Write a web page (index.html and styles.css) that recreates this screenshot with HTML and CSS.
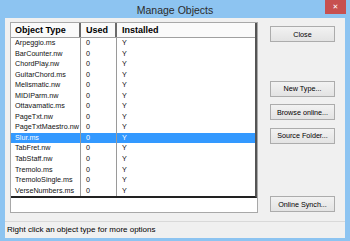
FILE: index.html
```html
<!DOCTYPE html>
<html lang="en">
<head>
    <meta charset="UTF-8">
    <title>Manage Objects</title>
    <link rel="stylesheet" href="styles.css">
</head>
<body>
    <div class="window">
        <div class="titlebar">
            <span></span>
            <span class="title">Manage Objects</span>
            <span class="close-x">&#x2715;</span>
        </div>

        <div class="client">
            <div class="main">
                <div class="list-box">
                    <div class="grid">
                        <div class="row head">
                            <div class="cell c1">Object Type</div>
                            <div class="cell c2">Used</div>
                            <div class="cell c3">Installed</div>
                        </div>
                        <div class="row"><div class="cell c1">Arpeggio.ms</div><div class="cell c2">0</div><div class="cell c3">Y</div></div>
                        <div class="row"><div class="cell c1">BarCounter.nw</div><div class="cell c2">0</div><div class="cell c3">Y</div></div>
                        <div class="row"><div class="cell c1">ChordPlay.nw</div><div class="cell c2">0</div><div class="cell c3">Y</div></div>
                        <div class="row"><div class="cell c1">GuitarChord.ms</div><div class="cell c2">0</div><div class="cell c3">Y</div></div>
                        <div class="row"><div class="cell c1">Melismatic.nw</div><div class="cell c2">0</div><div class="cell c3">Y</div></div>
                        <div class="row"><div class="cell c1">MIDIParm.nw</div><div class="cell c2">0</div><div class="cell c3">Y</div></div>
                        <div class="row"><div class="cell c1">Ottavamatic.ms</div><div class="cell c2">0</div><div class="cell c3">Y</div></div>
                        <div class="row"><div class="cell c1">PageTxt.nw</div><div class="cell c2">0</div><div class="cell c3">Y</div></div>
                        <div class="row"><div class="cell c1">PageTxtMaestro.nw</div><div class="cell c2">0</div><div class="cell c3">Y</div></div>
                        <div class="row selected"><div class="cell c1">Slur.ms</div><div class="cell c2">0</div><div class="cell c3">Y</div></div>
                        <div class="row"><div class="cell c1">TabFret.nw</div><div class="cell c2">0</div><div class="cell c3">Y</div></div>
                        <div class="row"><div class="cell c1">TabStaff.nw</div><div class="cell c2">0</div><div class="cell c3">Y</div></div>
                        <div class="row"><div class="cell c1">Tremolo.ms</div><div class="cell c2">0</div><div class="cell c3">Y</div></div>
                        <div class="row"><div class="cell c1">TremoloSingle.ms</div><div class="cell c2">0</div><div class="cell c3">Y</div></div>
                        <div class="row"><div class="cell c1">VerseNumbers.ms</div><div class="cell c2">0</div><div class="cell c3">Y</div></div>
                    </div>
                </div>

                <div class="buttons">
                    <button class="btn btn-close">Close</button>
                    <button class="btn btn-new">New Type...</button>
                    <button class="btn">Browse online...</button>
                    <button class="btn">Source Folder...</button>
                    <button class="btn btn-sync">Online Synch...</button>
                </div>
            </div>

            <div class="status">Right click an object type for more options</div>
        </div>
    </div>
</body>
</html>
```

FILE: styles.css
```css
body {
    margin: 0;
    font-family: "Liberation Sans", Arial, sans-serif;
}

.window {
    width: 350px;
    height: 241px;
    background-color: #8dc4f1;
    display: flex;
    flex-direction: column;
    overflow: hidden;
}

.titlebar {
    height: 18px;
    display: grid;
    grid-template-columns: 1fr auto 1fr;
    align-items: start;
}

.title {
    font-size: 10.5px;
    color: #2b2b2b;
    line-height: 20px;
}

.close-x {
    justify-self: end;
    width: 21px;
    height: 14px;
    margin-right: 4px;
    background-color: #c75050;
    color: #fff;
    font-family: "DejaVu Sans", sans-serif;
    font-size: 7px;
    font-weight: bold;
    line-height: 14px;
    text-align: center;
}

.client {
    flex: 1;
    margin: 0 5px 4px 5px;
    background-color: #f0f0f0;
    display: flex;
    flex-direction: column;
}

.main {
    display: flex;
    padding: 4px 0 0 5px;
    height: 203px;
    box-sizing: border-box;
}

.list-box {
    width: 248px;
    height: 191px;
    background-color: #fff;
    border: 1px solid #a8a8a8;
    box-sizing: border-box;
}

.grid {
    width: 246px;
    border-right: 2px solid #555;
    border-bottom: 2px solid #222;
    box-sizing: border-box;
}

.row {
    display: flex;
    height: 10.55px;
    font-size: 7.2px;
    line-height: 10.55px;
    color: #111;
}

.cell {
    white-space: nowrap;
    overflow: hidden;
    box-sizing: border-box;
}

.c1 {
    width: 70px;
    padding-left: 4px;
    border-right: 1px solid #9a9a9a;
}

.c2 {
    width: 36px;
    padding-left: 5px;
    border-right: 1px solid #9a9a9a;
}

.c3 {
    flex: 1;
    padding-left: 5px;
}

.row.head {
    height: 15px;
    line-height: 15px;
    font-size: 9px;
    font-weight: bold;
    background-color: #fafafa;
    border-bottom: 1px solid #a0a0a0;
    box-sizing: border-box;
    color: #000;
}

.row.head .c1,
.row.head .c2 {
    border-right: 2px solid #6a6a6a;
}

.row.selected {
    background-color: #3399ff;
    color: #fff;
}

.buttons {
    display: flex;
    flex-direction: column;
    margin-left: 12px;
    width: 65px;
}

.btn {
    height: 16px;
    padding: 0;
    margin-bottom: 7.5px;
    font-family: "Liberation Sans", Arial, sans-serif;
    font-size: 7.2px;
    color: #000;
    background: linear-gradient(#f2f2f2, #e3e3e3);
    border: 1px solid #acacac;
}

.btn-close {
    margin-top: 4px;
}

.btn-new {
    margin-top: 31px;
}

.btn-sync {
    margin-top: auto;
    margin-bottom: 9px;
}

.status {
    border-top: 1px solid #d9d9d9;
    flex: 1;
    font-size: 8px;
    line-height: 16px;
    padding-left: 2px;
    color: #000;
}
```
